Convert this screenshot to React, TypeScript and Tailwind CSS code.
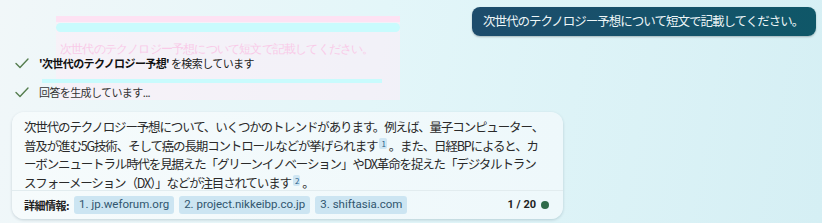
import React from 'react';

const jp = { fontFamily: '"Meiryo UI", "Noto Sans CJK JP", sans-serif' };

function Tick() {
  return (
    <svg width="14" height="11" viewBox="0 0 14 11" fill="none" className="shrink-0">
      <polyline points="1,5.5 5,9.5 13,1" stroke="#557d4e" strokeWidth="1.4" strokeLinecap="round" strokeLinejoin="round" />
    </svg>
  );
}

export default function App() {
  const sources = ['1. jp.weforum.org', '2. project.nikkeibp.co.jp', '3. shiftasia.com'];

  return (
    <div
      className="relative w-[822px] h-[223px] overflow-hidden bg-[linear-gradient(100deg,#f1f7f9_0%,#e3f6f9_45%,#d5eff4_100%)] text-[#222]"
      style={jp}
    >
      {/* ghost of the previous bubble (transition artifact) */}
      <div className="absolute left-[56px] top-[16px] w-[344px] h-[84px] bg-[#fbeef6]/60" />
      <div className="absolute left-[56px] top-[16px] w-[344px] h-[6px] bg-[#fde2f3]" />
      <div className="absolute left-[56px] top-[23px] w-[344px] h-[9px] rounded-[5px] bg-[#c9fbfd]" />
      <div className="absolute left-[60px] top-[43px] leading-none text-[12px] tracking-[-0.8px] text-[#f9cbe8] font-serif">
        次世代のテクノロジー予想について短文で記載してください。
      </div>
      <div className="absolute left-[42px] top-[79px] w-[340px] h-[4px] bg-[#c9fbfd]" />

      <div className="relative flex flex-col">
        {/* user message */}
        <div className="flex justify-end pt-[7px] pr-[6px]">
          <div className="h-[29px] w-[344px] rounded-[8px] bg-[linear-gradient(90deg,#1d4c6c,#0f5768)] shadow-[0_1px_2px_rgba(0,0,0,0.25)] flex items-center pl-[11px] text-[12.5px] tracking-[-1px] text-[#eef6f8]">
            次世代のテクノロジー予想について短文で記載してください。
          </div>
        </div>

        {/* progress steps */}
        <div className="flex flex-col gap-[14px] pl-[15px] mt-[20px]">
          <div className="flex items-center gap-[10px] h-[15px]">
            <Tick />
            <span className="text-[11px] leading-none tracking-[-0.6px] text-[#222]">
              <b className="font-bold text-[#111]">'次世代のテクノロジー予想'</b> を検索しています
            </span>
          </div>
          <div className="flex items-center gap-[10px] h-[15px]">
            <Tick />
            <span className="text-[11px] leading-none tracking-[-0.6px] text-[#333]">回答を生成しています...</span>
          </div>
        </div>

        {/* answer card */}
        <div className="ml-[12px] mt-[12px] w-[551px] h-[107px] rounded-[12px] bg-[linear-gradient(90deg,#f6fbfc,#eef8fb)] shadow-[0_1px_3px_rgba(0,40,60,0.18)] flex flex-col">
          <div className="px-[12px] pt-[6px] text-[12.5px] leading-[18.5px] tracking-[-1.15px] text-[#2a2a2a] h-[78px]">
            次世代のテクノロジー予想について、いくつかのトレンドがあります。例えば、量子コンピューター、<br />
            普及が進む5G技術、そして癌の長期コントロールなどが挙げられます
            <sup className="mx-[2px] px-[2px] text-[8px] bg-[#cfe6f3] text-[#2a5f8a] rounded-[2px]">1</sup>
            。また、日経BPによると、カ<br />
            ーボンニュートラル時代を見据えた「グリーンイノベーション」やDX革命を捉えた「デジタルトラン<br />
            スフォーメーション（DX）」などが注目されています
            <sup className="mx-[2px] px-[2px] text-[8px] bg-[#cfe6f3] text-[#2a5f8a] rounded-[2px]">2</sup>
            。
          </div>
          <div className="border-t border-[#e2ecef] flex-1 flex items-center px-[12px]">
            <span className="text-[11px] font-bold tracking-[-0.5px] text-[#222] mr-[5px]">詳細情報:</span>
            <div className="flex gap-[5px]">
              {sources.map((s) => (
                <span
                  key={s}
                  className="h-[18px] px-[5px] rounded-[3px] bg-[#cce5f2] text-[#31566f] text-[11.5px] flex items-center"
                  style={{ fontFamily: 'Roboto, sans-serif' }}
                >
                  {s}
                </span>
              ))}
            </div>
            <div className="ml-auto flex items-center gap-[5px] pr-[2px]">
              <span className="text-[11px] font-bold text-[#222]" style={{ fontFamily: 'Roboto, sans-serif' }}>1 / 20</span>
              <span className="w-[8px] h-[8px] rounded-full bg-[#2f6b4a]" />
            </div>
          </div>
        </div>
      </div>
    </div>
  );
}
